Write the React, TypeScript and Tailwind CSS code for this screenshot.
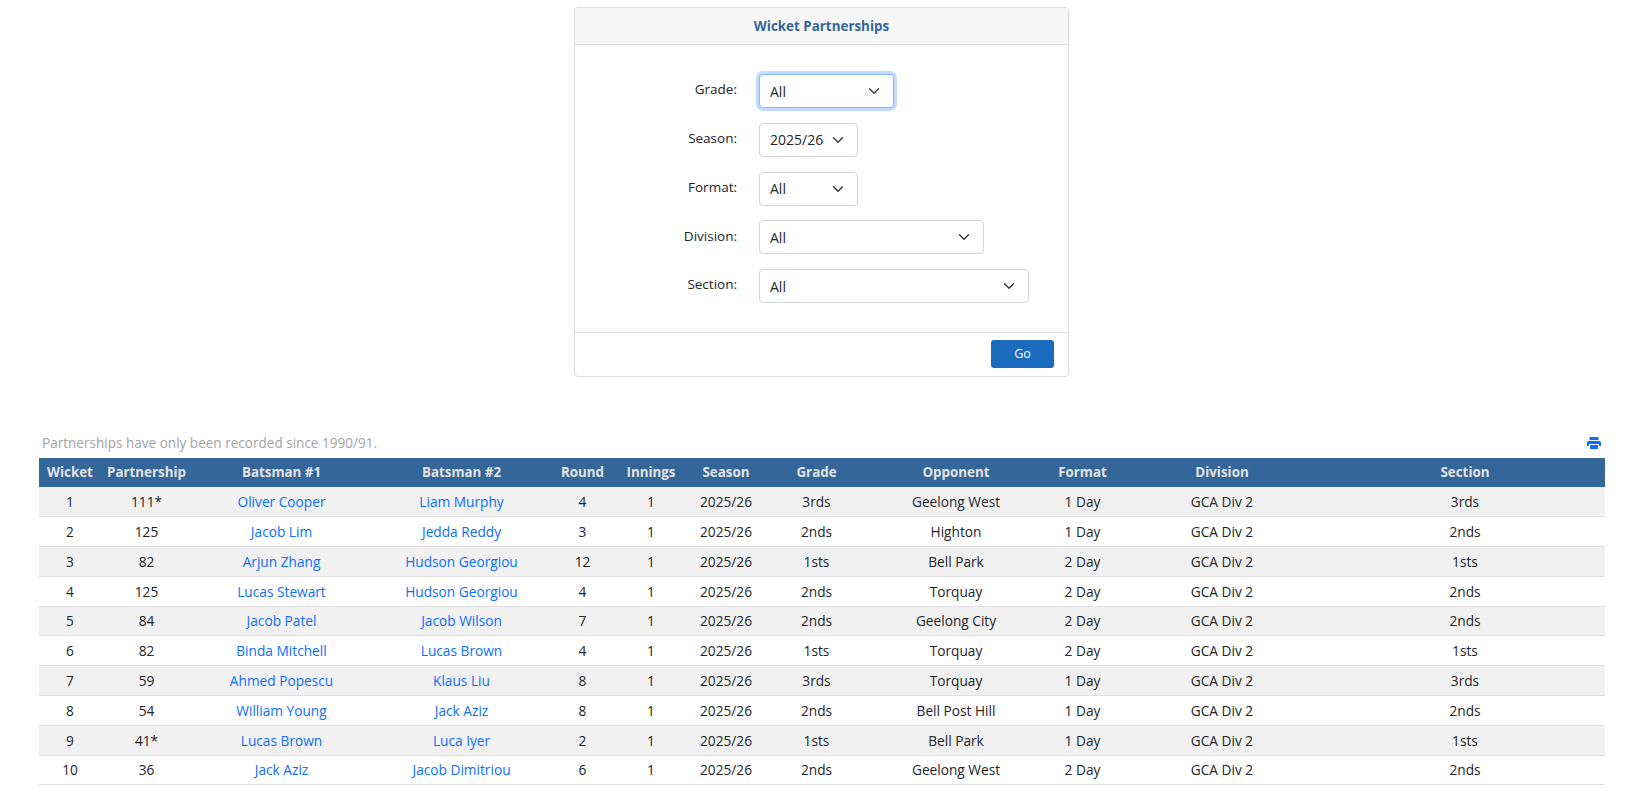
const filters = [
  { label: "Grade", value: "All", width: "w-[135px]", focused: true },
  { label: "Season", value: "2025/26", width: "w-[99px]" },
  { label: "Format", value: "All", width: "w-[99px]" },
  { label: "Division", value: "All", width: "w-[225px]" },
  { label: "Section", value: "All", width: "w-[270px]" },
]

const columns = [
  { name: "Wicket", width: "w-[62px]" },
  { name: "Partnership", width: "w-[91px]" },
  { name: "Batsman #1", width: "w-[179px]" },
  { name: "Batsman #2", width: "w-[181px]" },
  { name: "Round", width: "w-[61px]" },
  { name: "Innings", width: "w-[76px]" },
  { name: "Season", width: "w-[74px]" },
  { name: "Grade", width: "w-[107px]" },
  { name: "Opponent", width: "w-[172px]" },
  { name: "Format", width: "w-[81px]" },
  { name: "Division", width: "w-[198px]" },
  { name: "Section", width: "w-[284px] pl-[4px]" },
]

const rows = [
  ["1", "111*", "Oliver Cooper", "Liam Murphy", "4", "3rds", "Geelong West", "1 Day"],
  ["2", "125", "Jacob Lim", "Jedda Reddy", "3", "2nds", "Highton", "1 Day"],
  ["3", "82", "Arjun Zhang", "Hudson Georgiou", "12", "1sts", "Bell Park", "2 Day"],
  ["4", "125", "Lucas Stewart", "Hudson Georgiou", "4", "2nds", "Torquay", "2 Day"],
  ["5", "84", "Jacob Patel", "Jacob Wilson", "7", "2nds", "Geelong City", "2 Day"],
  ["6", "82", "Binda Mitchell", "Lucas Brown", "4", "1sts", "Torquay", "2 Day"],
  ["7", "59", "Ahmed Popescu", "Klaus Liu", "8", "3rds", "Torquay", "1 Day"],
  ["8", "54", "William Young", "Jack Aziz", "8", "2nds", "Bell Post Hill", "1 Day"],
  ["9", "41*", "Lucas Brown", "Luca Iyer", "2", "1sts", "Bell Park", "1 Day"],
  ["10", "36", "Jack Aziz", "Jacob Dimitriou", "6", "2nds", "Geelong West", "2 Day"],
]

function PrintIcon() {
  return (
    <svg viewBox="0 0 14 12" className="h-[12px] w-[14px]" fill="#0d6efd">
      <rect x="2.5" y="0" width="9" height="3" rx="0.6" />
      <path d="M1.5 4h11A1.5 1.5 0 0 1 14 5.5V9h-2V7H2v2H0V5.500A1.500 1.500 0 0 1 1.500 4z" />
      <rect x="3" y="8" width="8" height="4" rx="0.5" />
    </svg>
  )
}

function FilterRow({ label, value, width, focused }: { label: string; value: string; width: string; focused?: boolean }) {
  return (
    <div className="flex h-[34px] items-center">
      <label className="w-[184px] pr-[22px] pb-[3px] text-right text-[13.5px] text-[#212529]">{label}:</label>
      <div className={`relative h-[34px] ${width}`}>
        <select
          defaultValue={value}
          className={`h-full w-full appearance-none rounded-[4px] border bg-white pl-[10px] text-[14px] text-[#212529] ${
            focused ? "border-[#86b7fe] shadow-[0_0_0_3px_rgba(13,110,253,0.25)]" : "border-[#ced4da]"
          }`}
        >
          <option>{value}</option>
        </select>
        <svg viewBox="0 0 16 16" className="absolute top-[11px] right-[14px] h-[12px] w-[12px]" fill="none" stroke="#343a40" strokeWidth="1.8" strokeLinecap="round" strokeLinejoin="round">
          <path d="m2 5 6 6 6-6" />
        </svg>
      </div>
    </div>
  )
}

export default function App() {
  return (
    <div className="min-h-[793px] bg-white pt-[7px] font-['Open_Sans','Noto_Sans',sans-serif] text-[#212529]">
      <div className="mx-auto w-[495px] overflow-hidden rounded-[4px] border border-[#dcdfe2] bg-white">
        <div className="flex h-[37px] items-center justify-center border-b border-[#dcdfe2] bg-[#f7f7f7] text-[13.4px] font-bold text-[#336699]">
          Wicket Partnerships
        </div>
        <div className="flex h-[287px] flex-col gap-[14.75px] pt-[29px]">
          {filters.map((f) => (
            <FilterRow key={f.label} {...f} />
          ))}
        </div>
        <div className="flex h-[44px] items-center justify-end border-t border-[#dcdfe2] pr-[14px] pb-[2px]">
          <button className="h-[28px] w-[63px] rounded-[3px] bg-[#1a6bbd] pt-[2px] text-[12.5px] text-white">Go</button>
        </div>
      </div>

      <div className="mx-[39px] mt-[51px] w-[1566px]">
        <div className="flex h-[30px] items-center justify-between pr-[4px]">
          <span className="pl-[3px] text-[13.55px] text-[#a3a3a3]">Partnerships have only been recorded since 1990/91.</span>
          <PrintIcon />
        </div>
        <table className="w-full table-fixed border-collapse text-center text-[13.7px]">
          <thead>
            <tr className="h-[29px] bg-[#336699] text-[13.35px] font-bold text-[#e3e3e3]">
              {columns.map((c) => (
                <th key={c.name} className={c.width}>
                  {c.name}
                </th>
              ))}
            </tr>
          </thead>
          <tbody>
            {rows.map((r, i) => (
              <tr key={r[0]} className={`h-[29.8px] border-b border-[#dfdfdf] ${i % 2 === 0 ? "bg-[#f1f1f1]" : "bg-white"}`}>
                <td className="pt-[1px]">{r[0]}</td>
                <td className="pt-[1px]">{r[1]}</td>
                <td className="pt-[1px] text-[#0d6efd]">{r[2]}</td>
                <td className="pt-[1px] text-[#0d6efd]">{r[3]}</td>
                <td className="pt-[1px]">{r[4]}</td>
                <td className="pt-[1px]">1</td>
                <td className="pt-[1px]">2025/26</td>
                <td className="pt-[1px]">{r[5]}</td>
                <td className="pt-[1px]">{r[6]}</td>
                <td className="pt-[1px]">{r[7]}</td>
                <td className="pt-[1px]">GCA Div 2</td>
                <td className="pt-[1px] pl-[4px]">{r[5]}</td>
              </tr>
            ))}
          </tbody>
        </table>
      </div>
    </div>
  )
}
